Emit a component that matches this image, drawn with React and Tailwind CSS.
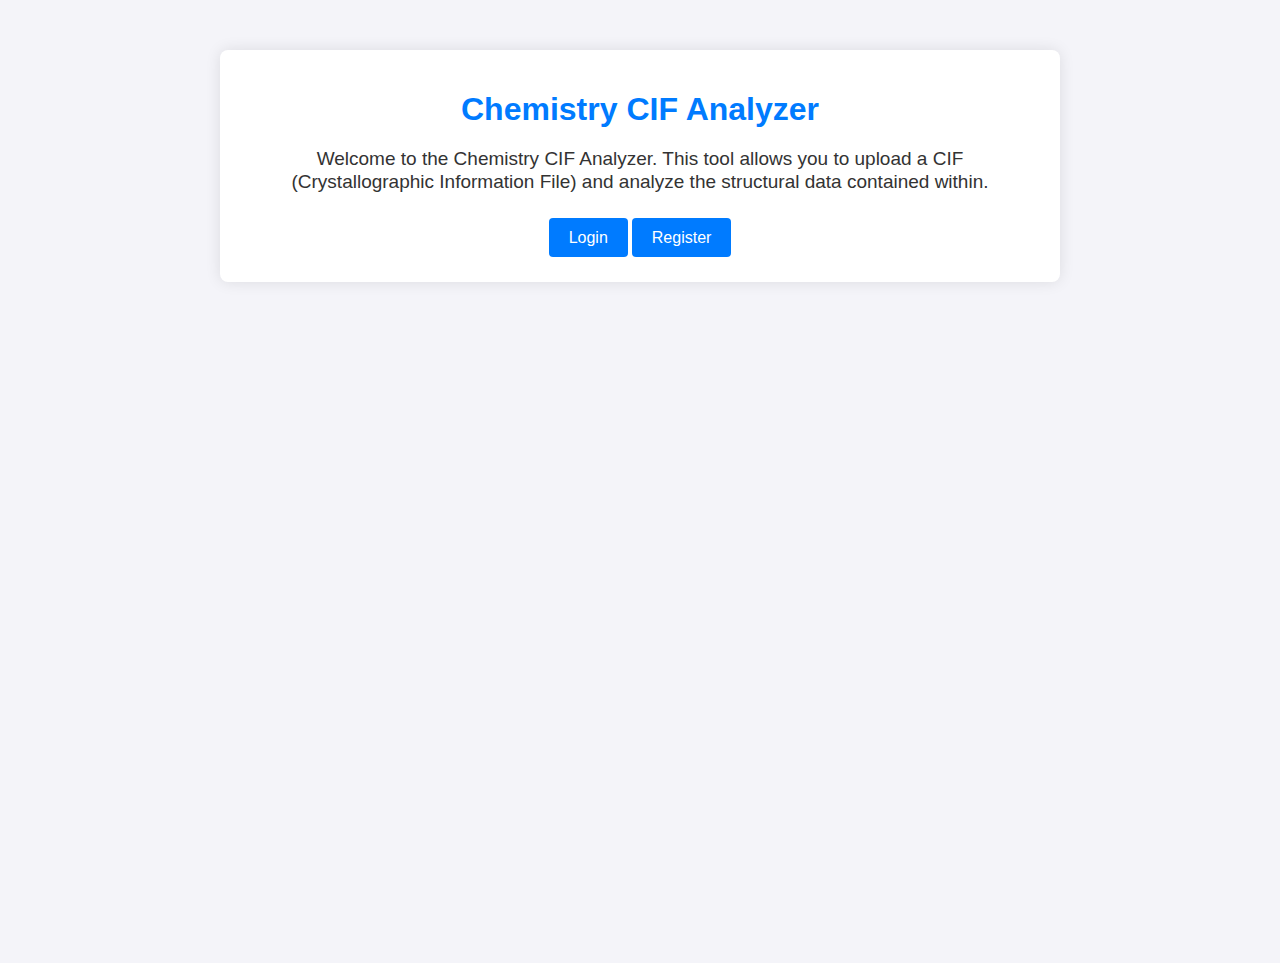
const buttonClass =
  "rounded-sm bg-[#007bff] px-5 py-2.5 text-base leading-[19px] text-white hover:bg-[#0056b3]";

export default function App() {
  return (
    <div className="min-h-screen bg-[#f4f4f9] px-5 py-[50px] font-['Liberation_Sans',Arial,sans-serif] text-[#333]">
      <main className="mx-auto max-w-[840px] rounded-lg bg-white px-5 pt-10 pb-[25px] text-center shadow-[0_0_15px_rgba(0,0,0,0.1)]">
        <h1 className="text-[32px] leading-[39px] font-bold text-[#007bff]">Chemistry CIF Analyzer</h1>
        <p className="mx-auto mt-[18px] max-w-[760px] text-[19px] leading-[23px]">
          Welcome to the Chemistry CIF Analyzer. This tool allows you to upload a CIF
          (Crystallographic Information File) and analyze the structural data contained within.
        </p>
        <nav className="mt-[25px] flex justify-center gap-1" aria-label="Account">
          <a href="/login" className={buttonClass}>Login</a>
          <a href="/register" className={buttonClass}>Register</a>
        </nav>
      </main>
    </div>
  );
}
